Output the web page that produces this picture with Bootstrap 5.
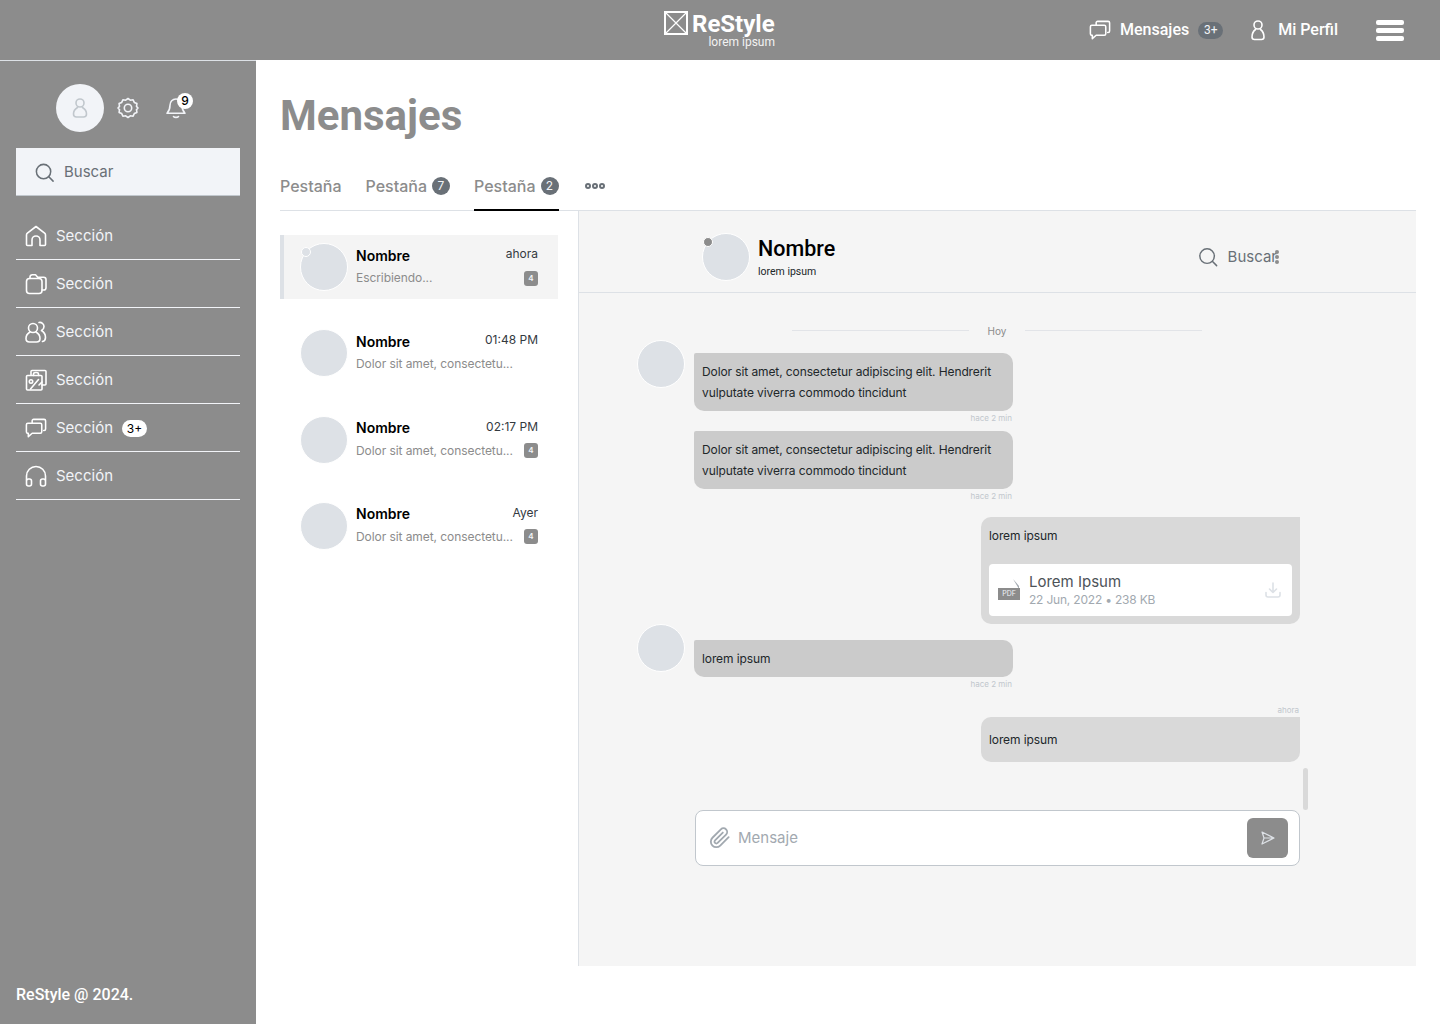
<!DOCTYPE html>
<html lang="es">
<head>
    <meta charset="UTF-8">
    <meta name="viewport" content="width=device-width, initial-scale=1.0">
    <title>Mensajes</title>
    <link href="https://cdn.jsdelivr.net/npm/bootstrap@5.3.0/dist/css/bootstrap.min.css" rel="stylesheet">
    <style>
        body { font-family: "Inter", "Liberation Sans", sans-serif; background: #fff; height: 1024px; overflow: hidden; }
        svg { display: block; flex-shrink: 0; }
        .ico { fill: none; stroke: currentColor; stroke-width: 1.6; stroke-linecap: round; stroke-linejoin: round; }

        /* top bar */
        .top-bar { height: 60px; background: #8c8c8c; padding: 0 36px; color: #fff; display: grid; grid-template-columns: 1fr auto 1fr; align-items: center; font-family: "Roboto", sans-serif; }
        .brand-box { display: flex; gap: 4px; position: relative; height: 48px; width: 112px; padding-top: 5px; }
        .brand-name { font-size: 24px; font-weight: 700; line-height: 24px; margin-top: 1px; height: 24px; }
        .brand-sub { position: absolute; right: 1px; top: 30px; font-size: 12px; line-height: 12px; color: #f2f2f2; }
        .top-links { justify-self: end; display: flex; align-items: center; font-size: 16px; font-weight: 500; }
        .top-pill { background: #697077; border-radius: 9px; width: 25px; height: 17px; font-size: 12px; font-weight: 400; line-height: 17px; text-align: center; margin-left: 9px; color: #f2f4f8; }
        .top-person { margin-left: 23px; }
        .burger { width: 28px; margin-left: 38px; display: flex; flex-direction: column; gap: 3px; }
        .burger span { height: 5px; border-radius: 2px; background: #fff; }

        /* sidebar */
        .app-shell { display: flex; height: 964px; }
        .side-bar { width: 256px; background: #8c8c8c; border-top: 1px solid #dde1e6; padding: 23px 16px 0; color: #f2f4f8; display: flex; flex-direction: column; }
        .side-top { display: flex; align-items: center; padding-left: 40px; height: 48px; }
        .side-avatar { width: 48px; height: 48px; border-radius: 50%; background: #f2f4f8; color: #c1c7cd; display: flex; align-items: center; justify-content: center; }
        .gear-ico { margin-left: 12px; }
        .bell-wrap { position: relative; margin-left: 24px; }
        .bell-count { position: absolute; top: -3px; right: -5px; width: 16px; height: 16px; border-radius: 50%; background: #fff; color: #000; font-size: 12px; font-weight: 500; line-height: 16px; text-align: center; }
        .side-search { height: 48px; margin-top: 16px; background: #f2f4f8; border-bottom: 1px solid #c1c7cd; display: flex; align-items: center; padding: 1px 0 0 18px; gap: 9px; color: #697077; font-size: 15px; }
        .side-nav { margin-top: 16px; }
        .side-item { height: 48px; border-bottom: 1px solid #f2f4f8; display: flex; align-items: center; padding: 1px 0 0 8px; gap: 8px; font-size: 15px; color: #f2f4f8; }
        .side-item svg { color: #fff; }
        .side-pill { background: #fff; color: #000; border-radius: 9px; width: 25px; height: 17px; font-size: 12px; line-height: 17px; text-align: center; margin-left: 1px; }
        .side-foot { margin-top: auto; font-family: "Roboto", sans-serif; font-weight: 500; font-size: 16px; line-height: 20px; padding-bottom: 19px; color: #fff; }

        /* main */
        .main-area { flex: 1; padding: 0 24px; min-width: 0; }
        .page-title { font-family: "Roboto", sans-serif; font-weight: 700; font-size: 42px; line-height: 48px; color: #8c8c8c; margin: 32px 0 0; }
        .tab-row { margin-top: 24px; height: 47px; border-bottom: 1px solid #dde1e6; display: flex; align-items: stretch; font-weight: 500; font-size: 16px; color: #8c8c8c; }
        .tab-link { display: flex; align-items: center; gap: 5px; height: 47px; margin-right: 24px; padding-bottom: 3px; color: #8c8c8c; }
        .tab-link.is-on { border-bottom: 2px solid #000; padding-bottom: 1px; margin-right: 26px; }
        .tab-num { width: 18px; height: 18px; border-radius: 50%; background: #697077; color: #f2f4f8; font-size: 12px; font-weight: 400; line-height: 18px; text-align: center; }
        .tab-more { display: flex; align-items: center; gap: 1px; padding-bottom: 2px; }
        .tab-more i { width: 6px; height: 6px; border: 2px solid #697077; border-radius: 50%; display: block; }

        .msg-layout { display: flex; height: 755px; }
        .thread-list { width: 299px; flex-shrink: 0; border-right: 1px solid #dde1e6; padding: 24px 20px 0 0; display: flex; flex-direction: column; gap: 22.33px; }
        .thread { height: 64px; display: flex; align-items: center; padding: 0 20px; position: relative; }
        .thread.is-on { background: #f4f4f4; border-left: 4px solid #dde1e6; padding-left: 16px; }
        .face { width: 48px; height: 48px; border-radius: 50%; background: #dde1e6; border: 1px solid #fff; flex-shrink: 0; position: relative; }
        .face-dot { position: absolute; top: 3px; left: 0; width: 10px; height: 10px; border-radius: 50%; background: #dde1e6; border: 1.5px solid #fff; }
        .face-dot.is-busy { background: #8c8c8c; }
        .thread-body { flex: 1; margin-left: 8px; min-width: 0; }
        .thread-line { display: flex; justify-content: space-between; align-items: center; height: 22px; }
        .thread-line:first-child { margin: -1px 0 1px; }
        .thread-name { font-size: 14px; font-weight: 600; color: #000; }
        .thread-time { font-size: 12px; color: #343a3f; margin-bottom: 2px; }
        .thread-text { font-size: 12px; letter-spacing: -.07px; color: #8c8c8c; }
        .thread-num { width: 14px; height: 15px; border-radius: 3px; background: #8c8c8c; color: #f2f4f8; font-size: 8px; font-weight: 600; line-height: 15px; text-align: center; }

        .chat-panel { flex: 1; background: #f5f5f5; position: relative; }
        .chat-head { height: 82px; border-bottom: 1px solid #dde1e6; display: flex; align-items: center; padding: 11px 139px 0 123px; }
        .chat-title { margin-left: 8px; }
        .chat-name { font-family: "Roboto", sans-serif; font-weight: 500; font-size: 21.5px; line-height: 26px; color: #000; }
        .chat-sub { font-family: "Roboto", sans-serif; font-size: 10.5px; line-height: 14px; margin-top: 3px; color: #21272a; }
        .chat-find { margin-left: auto; display: flex; align-items: center; gap: 10px; height: 24px; color: #697077; font-size: 15px; position: relative; }
        .kebab { position: absolute; right: -2px; top: 5px; display: flex; flex-direction: column; gap: 1px; }
        .kebab i { width: 4px; height: 4px; border-radius: 50%; background: #8c8c8c; display: block; }

        .chat-flow { width: 663px; margin-left: 58px; }
        .day-row { margin: 30px 0 0 155px; width: 410px; height: 16px; display: flex; align-items: center; font-size: 10px; color: #8c8c8c; }
        .day-row span { padding: 0 19px; }
        .day-row i { flex: 1; height: 1px; background: #e2e4e8; display: block; position: relative; top: -1px; }
        .from-row { display: flex; }
        .from-first { margin-top: 1px; }
        .from-col { margin-left: 9px; width: 319px; padding-top: 16px; }
        .from-first .from-col { padding-top: 13px; }
        .bubble { background: #cbcbcb; border-radius: 2px 10px 10px 10px; padding: 8px; font-size: 12px; letter-spacing: -.1px; line-height: 21px; color: #21272a; }
        .bubble-one { height: 37px; }
        .stamp { font-size: 8px; line-height: 14px; height: 14px; color: #c1c7cd; text-align: right; padding-right: 1px; }
        .stamp-gap { margin-bottom: 6px; }
        .stamp-top { margin-top: 12px; }
        .mine { width: 319px; margin-left: auto; background: #d9d9d9; border-radius: 10px 0 10px 10px; }
        .mine-file { margin-top: 14px; height: 107px; }
        .mine-last { height: 45px; padding-top: 12px; }
        .file-box { margin-top: 18px; height: 52px; background: #fff; border-radius: 4px; display: flex; align-items: center; padding: 0 10px 0 9px; }
        .file-info { padding-top: 1px; }
        .file-name { font-size: 15px; line-height: 18px; letter-spacing: 0; color: #4d5358; }
        .file-meta { font-size: 12px; line-height: 16px; margin-top: 1px; letter-spacing: -.2px; color: #a2a9b0; }
        .pdf-mark { width: 23px; height: 24px; position: relative; margin-right: 8px; }
        .pdf-mark b { position: absolute; left: 0; bottom: 2px; width: 22px; height: 12px; background: #8c8c8c; color: #f2f4f8; font-size: 7px; font-weight: 400; line-height: 12px; text-align: center; }
        .pdf-fold { position: absolute; right: 1px; top: 1px; }
        .file-down { color: #dde1e6; }
        .thumb { position: absolute; left: 724px; top: 557px; width: 5px; height: 42px; border-radius: 3px; background: #d9d9d9; }
        .composer { margin: 48px 0 0 58px; width: 605px; height: 56px; background: #fff; border: 1px solid #c1c7cd; border-radius: 8px; display: flex; align-items: center; padding: 0 11px 0 13px; }
        .composer input { border: 0; padding: 0; margin-left: 7px; box-shadow: none; background: transparent; font-size: 15px; }
        .composer input::placeholder { color: #a2a9b0; }
        .clip-ico { color: #a2a9b0; stroke-width: 2; }
        .send-btn { width: 41px; height: 40px; border-radius: 6px; background: #8c8c8c; border: 0; display: flex; align-items: center; justify-content: center; color: #dde1e6; flex-shrink: 0; padding: 0; }
        .send-ico { stroke-width: 1.2; }
    </style>
</head>
<body>
    <nav class="top-bar">
        <div></div>
        <a class="brand-box text-white text-decoration-none" href="#">
            <svg width="24" height="24" viewBox="0 0 24 24" fill="none" stroke="#fff" stroke-width="2"><rect x="1" y="1" width="22" height="22"/><path d="M1 1l22 22M23 1L1 23" stroke-width="1.2"/></svg>
            <span class="brand-name">ReStyle</span>
            <span class="brand-sub">lorem ipsum</span>
        </a>
        <div class="top-links">
            <svg class="ico" width="24" height="24" viewBox="-.5 -.5 25 25"><path d="M8 7V4.500C8 3.700 8.700 3 9.500 3h11C21.300 3 22 3.700 22 4.500V13c0 .8-.7 1.500-1.500 1.500H20"/><path d="M3.500 7h13c.8 0 1.500.7 1.500 1.500V16c0 .8-.7 1.500-1.500 1.500H8L4 21v-3.500h-.5C2.700 17.500 2 16.800 2 16V8.500C2 7.700 2.700 7 3.500 7z"/></svg>
            <span class="ms-2">Mensajes</span>
            <span class="top-pill">3+</span>
            <svg class="ico top-person" width="24" height="24" viewBox="0 0 24 24"><circle cx="12" cy="7" r="4"/><path d="M9.500 11.500C7.500 13 6 16 6 19c0 1.500 1 2.500 2.500 2.500h7C17 21.500 18 20.500 18 19c0-3-1.500-6-3.500-7.500"/></svg>
            <span class="ms-2">Mi Perfil</span>
            <div class="burger"><span></span><span></span><span></span></div>
        </div>
    </nav>

    <div class="app-shell">
        <aside class="side-bar">
            <div class="side-top">
                <div class="side-avatar">
                    <svg class="ico" width="24" height="24" viewBox="0 0 24 24"><circle cx="12" cy="7" r="4"/><path d="M9.500 11.500C7 13 5.500 15.500 5.500 18c0 1.800 1.200 3 3 3h7c1.800 0 3-1.200 3-3 0-2.500-1.500-5-4-6.500"/></svg>
                </div>
                <svg class="ico gear-ico" width="24" height="24" viewBox="0 0 24 24"><path d="M12 2.500l2.300 1.700 2.800-.4 1.200 2.600 2.600 1.200-.4 2.800L22 12l-1.500 1.600.4 2.800-2.600 1.200-1.200 2.600-2.800-.4L12 21.500l-2.300-1.700-2.800.4-1.200-2.600-2.600-1.200.4-2.800L2 12l1.500-1.600-.4-2.800 2.600-1.200 1.200-2.600 2.800.4z"/><circle cx="12" cy="12" r="3.700"/></svg>
                <div class="bell-wrap">
                    <svg class="ico" width="24" height="24" viewBox="0 0 24 24"><path d="M12 3c-3.500 0-6 2.800-6 6.200 0 4-1 6-3 8h18c-2-2-3-4-3-8C18 5.800 15.500 3 12 3z"/><path d="M9.500 20.500c1 1.200 4 1.200 5 0"/></svg>
                    <span class="bell-count">9</span>
                </div>
            </div>
            <div class="side-search">
                <svg class="ico" width="21" height="21" viewBox="0 0 22 22"><circle cx="10" cy="10" r="7.500"/><path d="M15.500 15.500L20 20"/></svg>
                <span>Buscar</span>
            </div>
            <div class="side-nav">
                <a class="side-item text-decoration-none" href="#">
                    <svg class="ico" width="24" height="24" viewBox="0 0 24 24"><path d="M2.500 20.500V11c0-.8.300-1.400.9-1.900L12 2.500l8.600 6.600c.6.500.9 1.100.9 1.900v9.500c0 .6-.4 1-1 1h-4.500V16a4 4 0 0 0-8 0v5.500H3.500c-.6 0-1-.4-1-1z"/></svg>
                    <span>Sección</span>
                </a>
                <a class="side-item text-decoration-none" href="#">
                    <svg class="ico" width="24" height="24" viewBox="0 0 24 24"><path d="M6 6.500V5C6 3.700 7 2.700 8.300 2.700h3.200l2.200 2.500h6c1.300 0 2.300 1 2.300 2.300v8.200c0 1.300-1 2.300-2.300 2.300H18"/><rect x="2.500" y="6.500" width="15.500" height="15" rx="3"/></svg>
                    <span>Sección</span>
                </a>
                <a class="side-item text-decoration-none" href="#">
                    <svg class="ico" width="24" height="24" viewBox="0 0 24 24"><circle cx="9" cy="8" r="4.500"/><path d="M6 12C3.500 13.500 2 16 2 18.500 2 20.500 3.500 22 5.500 22h7c2 0 3.500-1.500 3.500-3.500 0-2.500-1.500-5-4-6.500"/><path d="M15 2.500c2.500-.5 5 1.200 5 4 0 1.800-1 3.200-2.500 4 2.500 1.500 4 4 4 7 0 2-1 3.500-3 4"/></svg>
                    <span>Sección</span>
                </a>
                <a class="side-item text-decoration-none" href="#">
                    <svg class="ico" width="24" height="24" viewBox="0 0 24 24"><path d="M7 7V3.500C7 3 7.500 2.500 8 2.500h13c.5 0 1 .5 1 1V16c0 .5-.5 1-1 1h-3"/><rect x="2.500" y="7.500" width="15.500" height="14.500" rx="1"/><circle cx="7" cy="13.500" r="1.700"/><path d="M14.500 11.500L6.500 21M15 17l3-3M9.500 7.500V6c0-1.500 1.500-1.500 2.500-1.500s2.500 0 2.500 1.500v1.500"/></svg>
                    <span>Sección</span>
                </a>
                <a class="side-item text-decoration-none" href="#">
                    <svg class="ico" width="24" height="24" viewBox="-.5 -.5 25 25"><path d="M8 7V4.500C8 3.700 8.700 3 9.500 3h11C21.300 3 22 3.700 22 4.500V13c0 .8-.7 1.500-1.500 1.500H20"/><path d="M3.500 7h13c.8 0 1.500.7 1.500 1.500V16c0 .8-.7 1.500-1.500 1.500H8L4 21v-3.500h-.5C2.700 17.500 2 16.800 2 16V8.500C2 7.700 2.700 7 3.500 7z"/></svg>
                    <span>Sección</span>
                    <span class="side-pill">3+</span>
                </a>
                <a class="side-item text-decoration-none" href="#">
                    <svg class="ico" width="24" height="24" viewBox="0 0 24 24"><path d="M2.500 16V12a9.500 9.500 0 0 1 19 0v4"/><rect x="2.500" y="15" width="5" height="7" rx="2"/><rect x="16.500" y="15" width="5" height="7" rx="2"/></svg>
                    <span>Sección</span>
                </a>
            </div>
            <div class="side-foot">ReStyle @ 2024.</div>
        </aside>

        <main class="main-area">
            <h1 class="page-title">Mensajes</h1>
            <div class="tab-row">
                <a class="tab-link text-decoration-none" href="#">Pestaña</a>
                <a class="tab-link text-decoration-none" href="#">Pestaña <span class="tab-num">7</span></a>
                <a class="tab-link is-on text-decoration-none" href="#">Pestaña <span class="tab-num">2</span></a>
                <div class="tab-more"><i></i><i></i><i></i></div>
            </div>

            <div class="msg-layout">
                <div class="thread-list">
                    <div class="thread is-on">
                        <div class="face"><span class="face-dot"></span></div>
                        <div class="thread-body">
                            <div class="thread-line"><span class="thread-name">Nombre</span><span class="thread-time">ahora</span></div>
                            <div class="thread-line"><span class="thread-text">Escribiendo...</span><span class="thread-num">4</span></div>
                        </div>
                    </div>
                    <div class="thread">
                        <div class="face"></div>
                        <div class="thread-body">
                            <div class="thread-line"><span class="thread-name">Nombre</span><span class="thread-time">01:48 PM</span></div>
                            <div class="thread-line"><span class="thread-text">Dolor sit amet, consectetu...</span></div>
                        </div>
                    </div>
                    <div class="thread">
                        <div class="face"></div>
                        <div class="thread-body">
                            <div class="thread-line"><span class="thread-name">Nombre</span><span class="thread-time">02:17 PM</span></div>
                            <div class="thread-line"><span class="thread-text">Dolor sit amet, consectetu...</span><span class="thread-num">4</span></div>
                        </div>
                    </div>
                    <div class="thread">
                        <div class="face"></div>
                        <div class="thread-body">
                            <div class="thread-line"><span class="thread-name">Nombre</span><span class="thread-time">Ayer</span></div>
                            <div class="thread-line"><span class="thread-text">Dolor sit amet, consectetu...</span><span class="thread-num">4</span></div>
                        </div>
                    </div>
                </div>

                <section class="chat-panel">
                    <div class="chat-head">
                        <div class="face"><span class="face-dot is-busy"></span></div>
                        <div class="chat-title">
                            <div class="chat-name">Nombre</div>
                            <div class="chat-sub">lorem ipsum</div>
                        </div>
                        <div class="chat-find">
                            <svg class="ico" width="20" height="20" viewBox="0 0 22 22"><circle cx="10" cy="10" r="8"/><path d="M16 16l4.500 4.500"/></svg>
                            <span>Buscar</span>
                            <div class="kebab"><i></i><i></i><i></i></div>
                        </div>
                    </div>

                    <div class="chat-flow">
                        <div class="day-row"><i></i><span>Hoy</span><i></i></div>

                        <div class="from-row from-first">
                            <div class="face"></div>
                            <div class="from-col">
                                <div class="bubble">Dolor sit amet, consectetur adipiscing elit. Hendrerit vulputate viverra commodo tincidunt</div>
                                <div class="stamp stamp-gap">hace 2 min</div>
                                <div class="bubble">Dolor sit amet, consectetur adipiscing elit. Hendrerit vulputate viverra commodo tincidunt</div>
                                <div class="stamp">hace 2 min</div>
                            </div>
                        </div>

                        <div class="bubble mine mine-file">
                            lorem ipsum
                            <div class="file-box">
                                <div class="pdf-mark">
                                    <svg class="pdf-fold" width="8" height="10" viewBox="0 0 8 10"><path d="M1 0l6 7V10z" fill="#a2a9b0"/></svg>
                                    <b>PDF</b>
                                </div>
                                <div class="file-info flex-grow-1">
                                    <div class="file-name">Lorem Ipsum</div>
                                    <div class="file-meta">22 Jun, 2022 &bull; 238 KB</div>
                                </div>
                                <svg class="ico file-down" width="18" height="18" viewBox="0 0 18 18"><path d="M9 2v9M5.500 8L9 11.500 12.500 8M2 11.500V14c0 1 .8 2 2 2h10c1.200 0 2-1 2-2v-2.500"/></svg>
                            </div>
                        </div>

                        <div class="from-row">
                            <div class="face"></div>
                            <div class="from-col">
                                <div class="bubble bubble-one">lorem ipsum</div>
                                <div class="stamp">hace 2 min</div>
                            </div>
                        </div>

                        <div class="stamp stamp-top">ahora</div>
                        <div class="bubble mine mine-last">lorem ipsum</div>

                        <div class="composer">
                            <svg class="ico clip-ico" width="22" height="22" viewBox="0 0 24 24"><path d="M21.440 11.050l-9.190 9.190a6 6 0 0 1-8.490-8.490l9.190-9.190a4 4 0 0 1 5.660 5.660l-9.200 9.190a2 2 0 0 1-2.830-2.830l8.490-8.480"/></svg>
                            <input class="form-control" type="text" placeholder="Mensaje" aria-label="Mensaje">
                            <button class="send-btn" type="button">
                                <svg class="ico send-ico" width="16" height="16" viewBox="0 0 16 16"><path d="M2 2l12 6-12 6 2-6zM4 8h10"/></svg>
                            </button>
                        </div>
                    </div>
                    <div class="thumb"></div>
                </section>
            </div>
        </main>
    </div>
    <script src="https://cdn.jsdelivr.net/npm/bootstrap@5.3.0/dist/js/bootstrap.bundle.min.js"></script>
</body>
</html>
